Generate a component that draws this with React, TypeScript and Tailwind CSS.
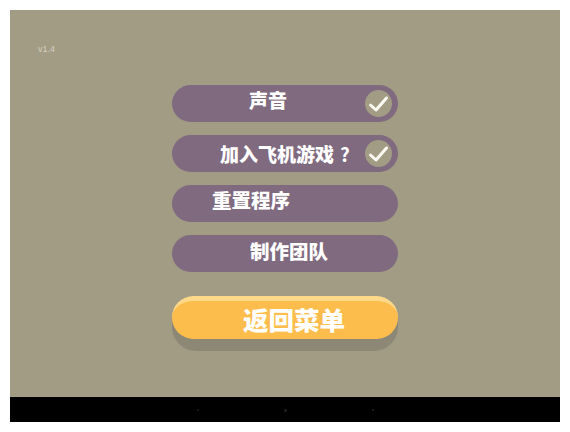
const cjk = 'font-["Noto_Sans_CJK_SC","Liberation_Sans",sans-serif]';

function Check() {
    return (
        <div className="w-[27px] h-[27px] rounded-full bg-[#a39c84] flex items-center justify-center">
            <svg width="21" height="18" viewBox="0 0 21 18" fill="none" stroke="#fbfaf3" strokeWidth="3" strokeLinecap="round" strokeLinejoin="round">
                <path d="M2.5 10 L8 15 L18.5 3" />
            </svg>
        </div>
    );
}

export default function App() {
    return (
        <div className={`w-[570px] h-[432px] bg-white p-[10px] overflow-hidden ${cjk}`}>
            <div className="w-[550px] h-[412px] flex flex-col">
                {/* Game area */}
                <div className="h-[387px] bg-[#a39c84] relative flex flex-col items-center pt-[75px]">
                    <span className="absolute left-[28px] top-[33px] text-[9px] leading-[12px] text-[#d2cec0] font-['Liberation_Sans',sans-serif]">v1.4</span>

                    <div className="w-[226px] flex flex-col gap-[13px]">
                        <div className="h-[37px] rounded-full bg-[#7f6a80] flex items-center pl-[77px] pr-[6px] justify-between">
                            <span className="text-[19px] leading-[30px] font-black text-white -mt-[8px]">声音</span>
                            <Check />
                        </div>
                        <div className="h-[37px] rounded-full bg-[#7f6a80] flex items-center pl-[48px] pr-[6px] justify-between">
                            <span className="text-[19px] leading-[30px] font-black text-white whitespace-nowrap">
                                加入飞机游戏<span className="font-bold text-[19px] ml-[6px]">?</span>
                            </span>
                            <Check />
                        </div>
                        <div className="h-[37px] rounded-full bg-[#7f6a80] flex items-center pl-[40px]">
                            <span className="text-[19.5px] leading-[30px] font-black text-white -mt-[7px]">重置程序</span>
                        </div>
                        <div className="h-[37px] rounded-full bg-[#7f6a80] flex items-center pl-[78px]">
                            <span className="text-[19.5px] leading-[30px] font-black text-white -mt-[6px]">制作团队</span>
                        </div>
                    </div>

                    <div className="w-[226px] h-[55px] mt-[24px] rounded-[24px] bg-[#8d8775]">
                        <div className="h-[43px] rounded-full bg-[#fdbd4c] border-t-[5px] border-[#ffd98a] flex items-center pl-[71px]">
                            <span className="text-[25.5px] leading-[34px] font-black text-white -mt-[2px]">返回菜单</span>
                        </div>
                    </div>
                </div>

                {/* Nav bar */}
                <div className="h-[25px] bg-black flex items-center justify-center gap-[85px] pt-[1px]">
                    <div className="w-[2px] h-[2px] rounded-full bg-[#222222]" />
                    <div className="w-[3px] h-[3px] rounded-full bg-[#222222]" />
                    <div className="w-[2px] h-[2px] rounded-full bg-[#222222]" />
                </div>
            </div>
        </div>
    );
}
